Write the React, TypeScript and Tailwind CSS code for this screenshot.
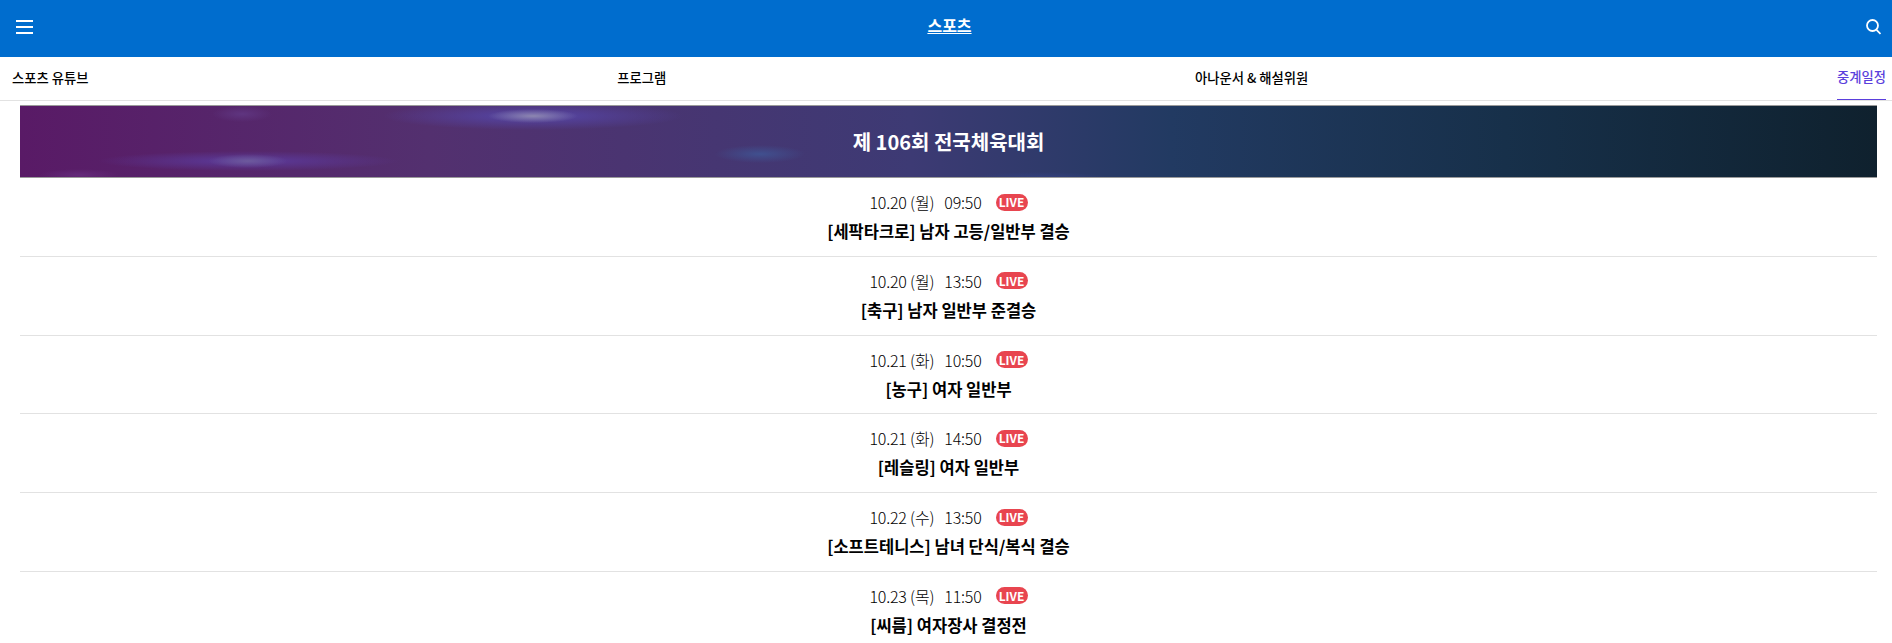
const tabs = [
  { id: "youtube", label: "스포츠 유튜브" },
  { id: "program", label: "프로그램" },
  { id: "announcer", label: "아나운서 & 해설위원" },
  { id: "schedule", label: "중계일정", active: true },
];

const schedule = [
  { id: "1", date: "10.20 (월)", time: "09:50", title: "[세팍타크로] 남자 고등/일반부 결승" },
  { id: "2", date: "10.20 (월)", time: "13:50", title: "[축구] 남자 일반부 준결승" },
  { id: "3", date: "10.21 (화)", time: "10:50", title: "[농구] 여자 일반부" },
  { id: "4", date: "10.21 (화)", time: "14:50", title: "[레슬링] 여자 일반부" },
  { id: "5", date: "10.22 (수)", time: "13:50", title: "[소프트테니스] 남녀 단식/복식 결승" },
  { id: "6", date: "10.23 (목)", time: "11:50", title: "[씨름] 여자장사 결정전" },
];

export default function App() {
  return (
    <div className="h-[643px] overflow-hidden bg-white font-['Noto_Sans_CJK_KR','Noto_Sans',sans-serif] text-black">
      <header className="flex h-[57px] items-center justify-between bg-[#006dce] pb-[3px] pl-[16px] pr-[11px] text-white">
        <svg width="17" height="14" viewBox="0 0 17 14" fill="white">
          <rect y="0" width="17" height="2" />
          <rect y="6" width="17" height="2" />
          <rect y="12" width="17" height="2" />
        </svg>
        <a className="mb-[4px] text-[16px] font-bold underline underline-offset-1">스포츠</a>
        <svg width="15" height="16" viewBox="0 0 15 16" fill="none" stroke="white" strokeWidth="1.8">
          <circle cx="6.5" cy="6.5" r="5.5" />
          <path d="M10.5 10.8L14.5 15" />
        </svg>
      </header>
      <nav className="flex h-[44px] items-stretch justify-between border-b border-[#e2e2e2] pl-[12px] pr-[6px]">
        {tabs.map(({ id, label, active }) => (
          <a
            key={id}
            className={`flex items-center pb-[2px] text-[13.3px] font-medium ${active ? "border-b border-[#5b3fdc] font-bold text-[#5b3fdc]" : ""}`}
          >
            {label}
          </a>
        ))}
      </nav>
      <main className="pl-[20px] pr-[15px] pt-[4px]">
        <div className="flex h-[73px] items-center justify-center border-y border-[#9a9a9a] bg-[radial-gradient(ellipse_45px_7px_at_513px_10px,#8d86b0,transparent),radial-gradient(ellipse_150px_14px_at_513px_10px,#5546a8,transparent),radial-gradient(ellipse_40px_7px_at_228px_55px,#6d5a9c,transparent),radial-gradient(ellipse_150px_10px_at_228px_55px,#5b3a9b,transparent),radial-gradient(ellipse_45px_9px_at_740px_48px,#40508f,transparent),radial-gradient(ellipse_30px_8px_at_222px_8px,#5f3580,transparent),radial-gradient(ellipse_40px_6px_at_59px_69px,#642a7a,transparent),radial-gradient(ellipse_70px_6px_at_1020px_72px,#33407f,transparent),linear-gradient(90deg,#591a66_0%,#53306f_22%,#3d3a74_48%,#223a62_62%,#17304a_80%,#0f212e_100%)]">
          <h2 className="text-[20px] font-bold text-white">제 106회 전국체육대회</h2>
        </div>
        <ul>
          {schedule.map(({ id, date, time, title }) => (
            <li key={id} className="flex h-[78.75px] flex-col items-center border-b border-[#e2e2e2] pt-[12px] last:border-b-0">
              <div className="flex h-[24px] items-center text-[16px] font-light tracking-[-0.2px]">
                <span>{date}</span>
                <span className="ml-[10px]">{time}</span>
                <span className="ml-[14px] flex h-[17px] w-[32px] items-center justify-center rounded-full bg-[#e8454f] text-[12px] font-bold tracking-normal text-white">
                  LIVE
                </span>
              </div>
              <p className="mt-[5px] text-[16.5px] leading-[24px] font-bold">{title}</p>
            </li>
          ))}
        </ul>
      </main>
    </div>
  );
}
